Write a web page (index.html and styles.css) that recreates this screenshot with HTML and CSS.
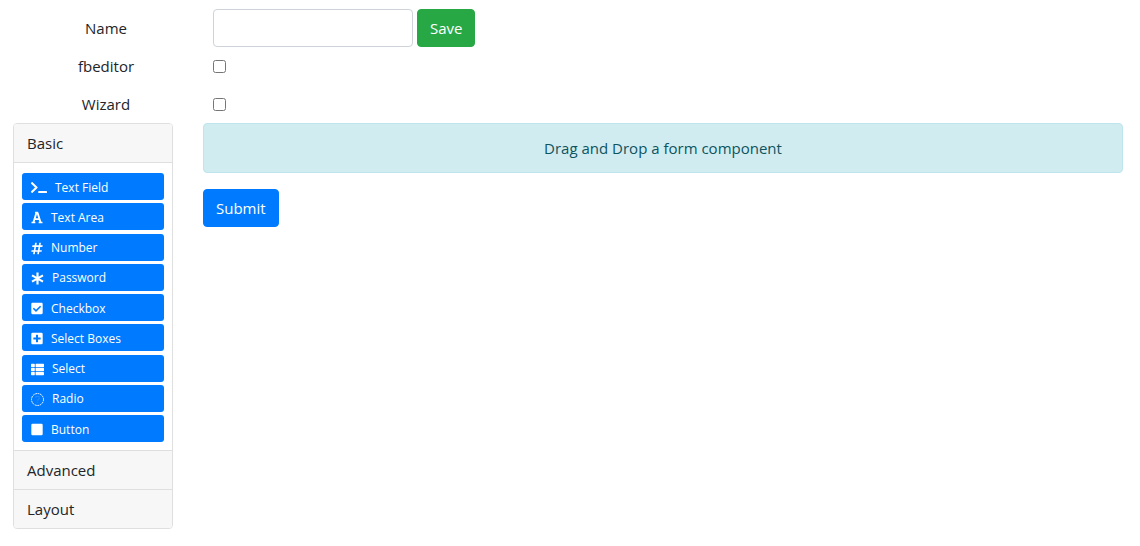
FILE: index.html
```html
<!DOCTYPE html>
<html lang="en">
<head>
<meta charset="utf-8">
<title>Form builder</title>
<link rel="stylesheet" href="styles.css">
</head>
<body>
<form class="settings">
  <div class="row">
    <label class="row-label" for="name">Name</label>
    <input class="text-input" id="name" type="text">
    <button class="btn btn-success" type="button">Save</button>
  </div>
  <div class="row">
    <label class="row-label" for="fbeditor">fbeditor</label>
    <input class="check" id="fbeditor" type="checkbox">
  </div>
  <div class="row">
    <label class="row-label" for="wizard">Wizard</label>
    <input class="check" id="wizard" type="checkbox">
  </div>
</form>
<div class="builder">
  <aside class="sidebar">
    <button class="group-header" type="button" aria-expanded="true">Basic</button>
    <div class="group-body">
      <button class="component" type="button"><svg class="icon icon-xl" viewBox="0 0 640 512"><path d="M257.981 272.971L63.638 467.314c-9.373 9.373-24.569 9.373-33.941 0L7.029 444.647c-9.357-9.357-9.375-24.522-.04-33.901L161.011 256 6.99 101.255c-9.335-9.379-9.317-24.544.04-33.901l22.667-22.667c9.373-9.373 24.569-9.373 33.941 0L257.981 239.03c9.373 9.372 9.373 24.568 0 33.941zM640 456v-32c0-13.255-10.745-24-24-24H312c-13.255 0-24 10.745-24 24v32c0 13.255 10.745 24 24 24h304c13.255 0 24-10.745 24-24z"/></svg>Text Field</button>
      <button class="component" type="button"><svg class="icon" viewBox="0 0 448 512"><g fill="none" stroke="currentColor"><path stroke-width="74" d="M86 440L206 60M362 440L242 60"/><path stroke-width="60" d="M130 320H318M8 450H160M288 450H440M150 62H260"/></g></svg>Text Area</button>
      <button class="component" type="button"><svg class="icon" viewBox="0 0 448 512"><path d="M440.667 182.109l7.143-40c1.313-7.355-4.342-14.109-11.813-14.109h-74.81l14.623-81.891C377.123 38.754 371.468 32 363.997 32h-40.632a12 12 0 0 0-11.813 9.891L296.175 128H197.54l14.623-81.891C213.477 38.754 207.822 32 200.35 32h-40.632a12 12 0 0 0-11.813 9.891L132.528 128H53.432a12 12 0 0 0-11.813 9.891l-7.143 40C33.163 185.246 38.818 192 46.289 192h74.81L98.242 320H19.146a12 12 0 0 0-11.813 9.891l-7.143 40C-1.123 377.246 4.532 384 12.003 384h74.81L72.19 465.891C70.877 473.246 76.532 480 84.003 480h40.632a12 12 0 0 0 11.813-9.891L151.826 384h98.634l-14.623 81.891C234.523 473.246 240.178 480 247.65 480h40.632a12 12 0 0 0 11.813-9.891L315.472 384h79.096a12 12 0 0 0 11.813-9.891l7.143-40c1.313-7.355-4.342-14.109-11.813-14.109h-74.81l22.857-128h79.096a12 12 0 0 0 11.813-9.891zM261.889 320h-98.634l22.857-128h98.634l-22.857 128z"/></svg>Number</button>
      <button class="component" type="button"><svg class="icon icon-lg" viewBox="0 0 512 512"><path fill="none" stroke="currentColor" stroke-width="84" d="M256 16V496M40 134L472 378M40 378L472 134"/></svg>Password</button>
      <button class="component" type="button"><svg class="icon" viewBox="0 0 448 512"><path d="M400 480H48c-26.51 0-48-21.49-48-48V80c0-26.51 21.49-48 48-48h352c26.51 0 48 21.49 48 48v352c0 26.51-21.49 48-48 48zm-204.686-98.059l184-184c6.248-6.248 6.248-16.379 0-22.627l-22.627-22.627c-6.248-6.248-16.379-6.249-22.628 0L184 302.745l-70.059-70.059c-6.248-6.248-16.379-6.248-22.628 0l-22.627 22.627c-6.248 6.248-6.248 16.379 0 22.627l104 104c6.249 6.25 16.379 6.25 22.628.001z"/></svg>Checkbox</button>
      <button class="component" type="button"><svg class="icon" viewBox="0 0 448 512"><path fill-rule="evenodd" d="M48 32H400a48 48 0 0 1 48 48V432a48 48 0 0 1-48 48H48a48 48 0 0 1-48-48V80a48 48 0 0 1 48-48zM184 124V216H92a12 12 0 0 0-12 12v56a12 12 0 0 0 12 12h92v92a12 12 0 0 0 12 12h56a12 12 0 0 0 12-12v-92h92a12 12 0 0 0 12-12v-56a12 12 0 0 0-12-12h-92v-92a12 12 0 0 0-12-12h-56a12 12 0 0 0-12 12z"/></svg>Select Boxes</button>
      <button class="component" type="button"><svg class="icon icon-lg" viewBox="0 0 512 512"><rect x="0" y="32" width="149" height="130" rx="24"/><rect x="181" y="32" width="331" height="130" rx="24"/><rect x="0" y="191" width="149" height="130" rx="24"/><rect x="181" y="191" width="331" height="130" rx="24"/><rect x="0" y="350" width="149" height="130" rx="24"/><rect x="181" y="350" width="331" height="130" rx="24"/></svg>Select</button>
      <button class="component" type="button"><svg class="icon icon-lg" viewBox="0 0 512 512"><g fill="none" stroke="currentColor"><circle cx="256" cy="256" r="236" stroke-width="38" stroke-dasharray="72 27"/><path stroke-width="40" stroke-opacity=".15" d="M180 190C190 110 330 110 330 195C330 245 256 245 256 310M256 345V385"/></g></svg>Radio</button>
      <button class="component" type="button"><svg class="icon" viewBox="0 0 448 512"><rect x="0" y="32" width="448" height="448" rx="48"/></svg>Button</button>
    </div>
    <button class="group-header" type="button" aria-expanded="false">Advanced</button>
    <button class="group-header" type="button" aria-expanded="false">Layout</button>
  </aside>
  <main class="canvas">
    <div class="drop-zone">Drag and Drop a form component</div>
    <button class="btn btn-primary" type="button">Submit</button>
  </main>
</div>
</body>
</html>
```
FILE: styles.css
```css
* {
  box-sizing: border-box;
}

body {
  margin: 0;
  padding: 9px 17px 17px 13px;
  background: #fff;
  color: #212529;
  font: 15px/24px "Segoe UI", "Open Sans", sans-serif;
}

button,
input {
  font: inherit;
}

.row {
  display: flex;
  align-items: center;
  gap: 4px;
  min-height: 38px;
}

.row-label {
  width: 186px;
  margin-right: 10px;
  text-align: center;
}

.text-input {
  width: 200px;
  height: 38px;
  padding: 6px 12px;
  border: 1px solid #ced4da;
  border-radius: 4px;
  background: #fff;
}

.check {
  width: 13px;
  height: 13px;
  margin: 0;
}

.btn {
  padding: 6px 12px;
  border: 1px solid;
  border-radius: 4px;
  color: #fff;
}

.btn-success {
  border-color: #28a745;
  background: #28a745;
}

.btn-primary {
  border-color: #007bff;
  background: #007bff;
}

.builder {
  display: flex;
  align-items: flex-start;
  gap: 30px;
}

.sidebar {
  flex: 0 0 160px;
  overflow: hidden;
  border: 1px solid #dfdfdf;
  border-radius: 4px;
}

.group-header {
  display: block;
  width: 100%;
  padding: 7px 13px;
  border: 0;
  background: #f7f7f7;
  color: #212529;
  text-align: left;
}

.group-header + .group-header,
.group-body + .group-header,
.group-body {
  border-top: 1px solid #dfdfdf;
}

.group-body {
  display: flex;
  flex-direction: column;
  justify-content: space-between;
  min-height: 288px;
  padding: 10px 8px 8px;
}

.component {
  display: flex;
  align-items: center;
  gap: 8px;
  height: 27px;
  padding: 2px 9px 0;
  border: 0;
  border-radius: 3px;
  background: #007bff;
  color: #fff;
  font-size: 12px;
  line-height: 20px;
}

.icon {
  flex: none;
  width: 12px;
  height: 13px;
  fill: currentColor;
}

.icon-lg {
  width: 13px;
}

.icon-xl {
  width: 16px;
}

.canvas {
  flex: 1;
  min-width: 0;
}

.drop-zone {
  margin-bottom: 16px;
  padding: 12px 20px;
  border: 1px solid #bee5eb;
  border-radius: 4px;
  background: #d1ecf1;
  color: #0c5460;
  text-align: center;
}
```
